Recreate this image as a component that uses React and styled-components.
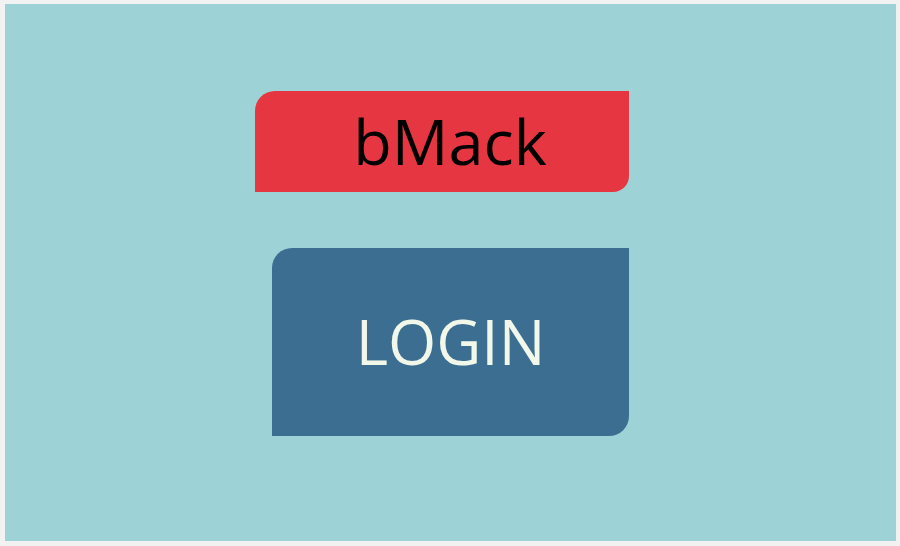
import React from "react";
import styled, { createGlobalStyle } from "styled-components";

const GlobalStyle = createGlobalStyle`
  html, body {
    margin: 0;
    padding: 0;
    background: #f2f2f2;
  }
  * {
    box-sizing: border-box;
  }
`;

const Frame = styled.div`
  width: 900px;
  height: 546px;
  padding: 4px 4px 5px 5px;
  background: #f2f2f2;
`;

const Panel = styled.div`
  height: 100%;
  background: #9dd3d7;
  display: flex;
  justify-content: center;
  padding-top: 87px;
`;

const Column = styled.div`
  width: 374px;
  margin-right: 17px;
  display: flex;
  flex-direction: column;
  align-items: flex-end;
  gap: 56px;
`;

const Brand = styled.div`
  width: 100%;
  height: 101px;
  background: #e63641;
  border-radius: 20px 0 16px 0;
  display: flex;
  align-items: center;
  justify-content: center;
  padding: 0 0 3px 16px;
  font-family: "Open Sans", "Noto Sans", sans-serif;
  font-size: 63px;
  color: #000;
`;

const LoginButton = styled.button`
  width: 357px;
  height: 188px;
  border: none;
  background: #3c6e91;
  border-radius: 20px 0 20px 0;
  display: flex;
  align-items: center;
  justify-content: center;
  font-family: "Open Sans", "Noto Sans", sans-serif;
  font-size: 62px;
  color: #f1f8ea;
  cursor: pointer;
  padding: 0 0 3px 0;
`;

const App = () => {
  return (
    <Frame>
      <GlobalStyle />
      <Panel>
        <Column>
          <Brand>bMack</Brand>
          <LoginButton>LOGIN</LoginButton>
        </Column>
      </Panel>
    </Frame>
  );
};

export default App;
